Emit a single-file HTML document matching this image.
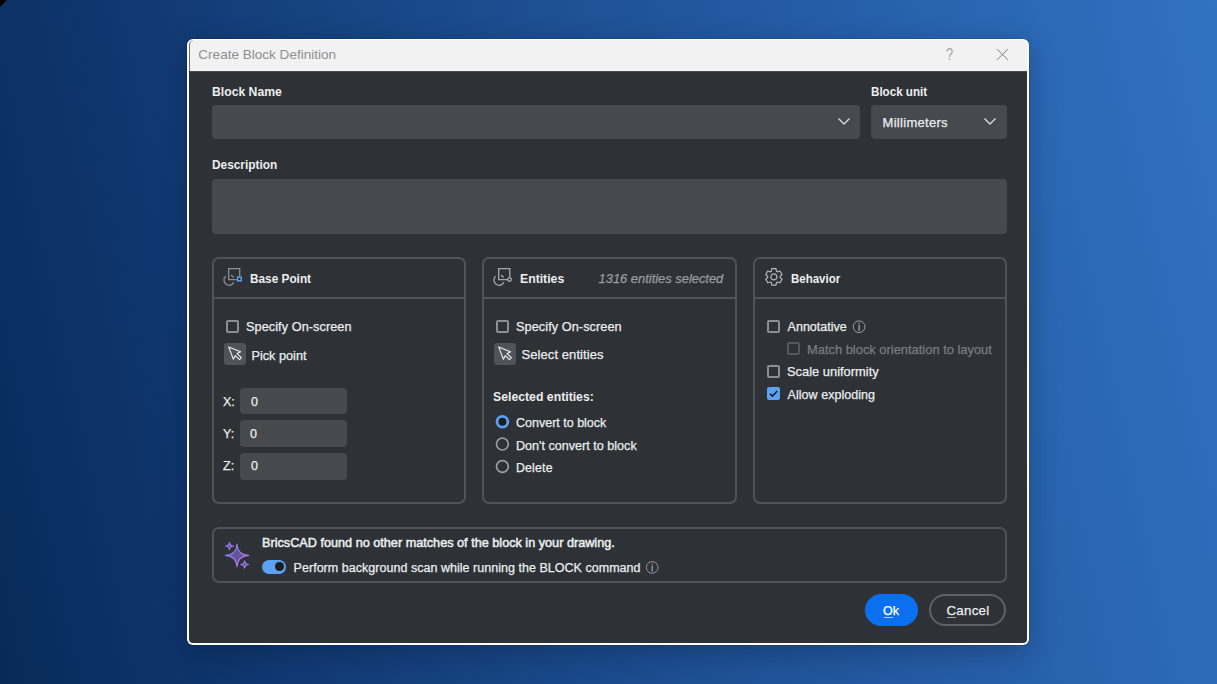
<!DOCTYPE html>
<html><head><meta charset="utf-8">
<style>
*{margin:0;padding:0;box-sizing:border-box}
html,body{width:1217px;height:684px;overflow:hidden}
body{position:relative;font-family:"Liberation Sans",sans-serif;background:linear-gradient(78deg,#082a5a 0%,#1d4f93 50%,#3172c2 100%)}
.a{position:absolute}
.t{position:absolute;white-space:nowrap;line-height:1;color:#eceef0;-webkit-text-stroke-width:0.25px}
.b{font-weight:bold;-webkit-text-stroke-width:0}
#dlg{left:187px;top:39px;width:842px;height:606px;background:#fff;border-radius:6px;box-shadow:0 0 1px rgba(0,0,0,.6),0 8px 28px rgba(0,10,30,.28)}
#title{left:189px;top:40px;width:838px;height:31px;background:#f2f2f2;border-top-left-radius:5px;border-top-right-radius:5px;border-left:1px solid #6a6a6a}
#content{left:189px;top:71px;width:838px;height:572px;background:#2e3136;border-bottom-left-radius:4px;border-bottom-right-radius:4px}
.inp{position:absolute;background:#46494e;border-radius:4px}
.grp{position:absolute;border:2px solid #505358;border-radius:7px}
.grp .div{position:absolute;left:0;right:0;top:38px;height:2px;background:#505358}
.cb{position:absolute;width:13px;height:13px;border:2px solid #8b8e93;border-radius:2px}
.rad{position:absolute;width:13px;height:13px;border:2px solid #8b8e93;border-radius:50%}
.btnic{position:absolute;width:22px;height:21px;background:#50535a;border-radius:3px}
</style></head><body>
<div class="a" style="left:0;top:0;width:0;height:0;border-top:7px solid #000;border-right:7px solid transparent"></div>
<div id="dlg" class="a"></div>
<div id="title" class="a"></div>
<div id="content" class="a"></div>
<div class="a" style="left:190px;top:71px;width:837px;height:1px;background:#4a4d52"></div>
<div class="a" style="left:190px;top:72px;width:837px;height:1px;background:#2a2d31"></div>

<!-- title -->
<div class="t" style="left:198.3px;top:47.8px;font-size:13.55px;color:#8f8f8f;-webkit-text-stroke-width:0">Create Block Definition</div>
<div class="t" style="left:946.3px;top:47.4px;font-size:16px;color:#a3a3a3;-webkit-text-stroke-width:0;transform-origin:0 0;transform:scaleX(0.8)">?</div>
<svg class="a" style="left:996px;top:48px" width="13" height="13" viewBox="0 0 13 13"><path d="M1 1L12 12M12 1L1 12" stroke="#8f8f8f" stroke-width="1.05" fill="none"/></svg>

<!-- block name -->
<div class="t b" style="left:211.5px;top:85.8px;font-size:12.8px;transform-origin:0 0;transform:scaleX(0.953)">Block Name</div>
<div class="inp" style="left:212px;top:105px;width:648px;height:34px"></div>
<svg class="a" style="left:837px;top:117px" width="14" height="9" viewBox="0 0 14 9"><path d="M1.5 1.5L7 7L12.5 1.5" stroke="#d8dadc" stroke-width="1.4" fill="none"/></svg>
<div class="t b" style="left:871.1px;top:86.3px;font-size:12.8px;transform-origin:0 0;transform:scaleX(0.908)">Block unit</div>
<div class="inp" style="left:871px;top:105px;width:135.5px;height:34px"></div>
<div class="t" style="left:882.5px;top:115.8px;font-size:13px;letter-spacing:0.3px">Millimeters</div>
<svg class="a" style="left:983px;top:117px" width="14" height="9" viewBox="0 0 14 9"><path d="M1.5 1.5L7 7L12.5 1.5" stroke="#d8dadc" stroke-width="1.4" fill="none"/></svg>

<!-- description -->
<div class="t b" style="left:211.9px;top:159.2px;font-size:12.8px;transform-origin:0 0;transform:scaleX(0.926)">Description</div>
<div class="inp" style="left:212px;top:178.5px;width:794.5px;height:55.5px"></div>

<!-- groups -->
<div class="grp" style="left:212px;top:257px;width:253.5px;height:246.8px"><div class="div"></div></div>
<div class="grp" style="left:482px;top:257px;width:254.5px;height:246.8px"><div class="div"></div></div>
<div class="grp" style="left:753px;top:257px;width:253.5px;height:246.8px"><div class="div"></div></div>

<!-- base point -->
<div class="t b" style="left:250.2px;top:272.8px;font-size:12.8px;transform-origin:0 0;transform:scaleX(0.923)">Base Point</div>
<div class="cb" style="left:226px;top:319.5px"></div>
<div class="t" style="left:246px;top:321.2px;font-size:12.7px;letter-spacing:0.07px">Specify On-screen</div>
<div class="btnic" style="left:224px;top:343px;height:22px"></div>
<div class="t" style="left:251.5px;top:350.2px;font-size:12.7px">Pick point</div>
<div class="t" style="left:223px;top:395.8px;font-size:12.5px">X:</div>
<div class="inp" style="left:240px;top:387.5px;width:107px;height:26.5px"></div>
<div class="t" style="left:251px;top:395.8px;font-size:12.5px">0</div>
<div class="t" style="left:223px;top:427.5px;font-size:12.5px">Y:</div>
<div class="inp" style="left:239.5px;top:420px;width:107.5px;height:26.5px"></div>
<div class="t" style="left:250px;top:427.5px;font-size:12.5px">0</div>
<div class="t" style="left:223px;top:460.4px;font-size:12.5px">Z:</div>
<div class="inp" style="left:240px;top:453px;width:107px;height:26.5px"></div>
<div class="t" style="left:251px;top:460.4px;font-size:12.5px">0</div>

<!-- entities -->
<div class="t b" style="left:520.3px;top:272.8px;font-size:12.8px;transform-origin:0 0;transform:scaleX(0.956)">Entities</div>
<div class="t" style="left:598.6px;top:272.6px;font-size:12.9px;font-style:italic;color:#9a9da2">1316 entities selected</div>
<div class="cb" style="left:496px;top:319.5px"></div>
<div class="t" style="left:516px;top:321.2px;font-size:12.7px;letter-spacing:0.08px">Specify On-screen</div>
<div class="btnic" style="left:494px;top:343px;height:21.5px"></div>
<div class="t" style="left:521.5px;top:348.4px;font-size:13px;letter-spacing:0.08px">Select entities</div>
<div class="t b" style="left:492.9px;top:390.8px;font-size:12.8px;transform-origin:0 0;transform:scaleX(0.958)">Selected entities:</div>
<svg class="a" style="left:494px;top:413px" width="18" height="18" viewBox="0 0 18 18"><circle cx="8.4" cy="8.7" r="5.4" fill="#1b1d21" stroke="#5ba1f6" stroke-width="2.8"/></svg>
<div class="t" style="left:516px;top:417px;font-size:12.5px">Convert to block</div>
<svg class="a" style="left:494px;top:435px" width="18" height="18" viewBox="0 0 18 18"><circle cx="8.4" cy="9.1" r="5.9" fill="none" stroke="#9a9da2" stroke-width="1.7"/></svg>
<div class="t" style="left:516px;top:440.2px;font-size:12.6px">Don't convert to block</div>
<svg class="a" style="left:494px;top:458px" width="18" height="18" viewBox="0 0 18 18"><circle cx="8.4" cy="8.5" r="5.9" fill="none" stroke="#9a9da2" stroke-width="1.7"/></svg>
<div class="t" style="left:516px;top:462px;font-size:12.3px;letter-spacing:0.2px">Delete</div>

<!-- behavior -->
<div class="t b" style="left:791.2px;top:272.9px;font-size:12.8px;transform-origin:0 0;transform:scaleX(0.898)">Behavior</div>
<div class="cb" style="left:767px;top:319.5px"></div>
<div class="t" style="left:787.6px;top:320.5px;font-size:12.5px">Annotative</div>
<div class="cb" style="left:787px;top:342px;border-color:#55585d"></div>
<div class="t" style="left:807px;top:344px;font-size:12.9px;color:#7a7d82">Match block orientation to layout</div>
<div class="cb" style="left:767px;top:364.6px"></div>
<div class="t" style="left:787px;top:365.7px;font-size:12.9px">Scale uniformity</div>
<div class="a" style="left:767px;top:387px;width:13px;height:13px;border-radius:2px;background:#5ba1f6"></div>
<svg class="a" style="left:767px;top:387px" width="13" height="13" viewBox="0 0 13 13"><path d="M3 6.8L5.4 9.2L10.2 4" stroke="#15171a" stroke-width="1.6" fill="none"/></svg>
<div class="t" style="left:787.6px;top:389px;font-size:12.5px;letter-spacing:0.04px">Allow exploding</div>

<!-- notification -->
<div class="grp" style="left:212px;top:527px;width:794.5px;height:56px"></div>
<div class="t" style="left:261.5px;top:536.8px;font-size:12.8px;-webkit-text-stroke-width:0.5px;transform-origin:0 0;transform:scaleX(0.99)">BricsCAD found no other matches of the block in your drawing.</div>
<div class="a" style="left:261.8px;top:559.5px;width:24.6px;height:14.3px;border-radius:7.15px;background:#5ba1f6"></div>
<div class="a" style="left:275.4px;top:562.4px;width:8.6px;height:8.6px;border-radius:50%;background:#1b1d21"></div>
<div class="t" style="left:293.6px;top:562px;font-size:12.5px;letter-spacing:0.03px">Perform background scan while running the BLOCK command</div>

<!-- buttons -->
<div class="a" style="left:865px;top:594px;width:53px;height:32px;border-radius:16px;background:#0b70f0"></div>
<div class="t" style="left:883px;top:605px;font-size:12.5px;color:#fff">Ok</div>
<div class="a" style="left:929px;top:594px;width:77px;height:32px;border-radius:16px;border:2px solid #5e6166"></div>
<div class="t" style="left:946.5px;top:604.2px;font-size:13.3px;letter-spacing:0.25px">Cancel</div>
<div class="a" style="left:883.5px;top:617px;width:9px;height:1px;background:#b8c8e8"></div>
<div class="a" style="left:946.5px;top:617px;width:9px;height:1px;background:#a9acb0"></div>

<!-- icons -->
<svg class="a" style="left:220px;top:264px" width="26" height="26" viewBox="0 0 26 26">
<path d="M19.7 12.4V4.6H8.7V15.7H16.6" stroke="#8d9095" stroke-width="1.3" fill="none"/>
<path d="M11 11L13.7 13.5" stroke="#8d9095" stroke-width="1.3" fill="none"/>
<path d="M5.7 12.2A5.2 5.2 0 1 0 13.9 18.25" stroke="#8d9095" stroke-width="1.3" fill="none"/>
<rect x="17.6" y="13.2" width="3.6" height="3.6" stroke="#5ba1f6" stroke-width="1.5" fill="#1b1d21"/>
</svg>
<svg class="a" style="left:490px;top:264px" width="26" height="26" viewBox="0 0 26 26">
<path d="M19.8 13.6V4.6H8.7V15.7H17.4" stroke="#a6a9ae" stroke-width="1.3" fill="none"/>
<path d="M11 11L13.7 13.5" stroke="#a6a9ae" stroke-width="1.3" fill="none"/>
<path d="M5.7 12.2A5.2 5.2 0 1 0 13.9 18.25" stroke="#a6a9ae" stroke-width="1.3" fill="none"/>
<circle cx="19.5" cy="15.6" r="1.8" stroke="#b5b8bd" stroke-width="1.3" fill="#1b1d21"/>
</svg>
<svg class="a" style="left:761px;top:264px" width="26" height="26" viewBox="-12.9 -12.9 26 26">
<path d="M-2.62 -5.62 L-2.06 -8.25 L2.06 -8.25 L2.62 -5.62 A6.2 6.2 0 0 1 3.56 -5.08 L6.11 -5.90 L8.17 -2.34 L6.18 -0.54 A6.2 6.2 0 0 1 6.18 0.54 L8.17 2.34 L6.11 5.90 L3.56 5.08 A6.2 6.2 0 0 1 2.62 5.62 L2.06 8.25 L-2.06 8.25 L-2.62 5.62 A6.2 6.2 0 0 1 -3.56 5.08 L-6.11 5.90 L-8.17 2.34 L-6.18 0.54 A6.2 6.2 0 0 1 -6.18 -0.54 L-8.17 -2.34 L-6.11 -5.90 L-3.56 -5.08 A6.2 6.2 0 0 1 -2.62 -5.62 Z" stroke="#b5b8bd" stroke-width="1.2" fill="none" stroke-linejoin="round"/>
<circle cx="0" cy="0" r="3" stroke="#b5b8bd" stroke-width="1.2" fill="none"/>
</svg>
<svg class="a" style="left:222px;top:341px" width="26" height="26" viewBox="0 0 26 26">
<path d="M6.65 5.9L18.6 10.8L15 12.6L19.4 16.7L17.5 18.6L13.3 14.6L11.4 18.25Z" stroke="#f0f1f2" stroke-width="1.1" fill="none" stroke-linejoin="round"/>
</svg>
<svg class="a" style="left:492px;top:341px" width="26" height="26" viewBox="0 0 26 26">
<path d="M6.65 5.9L18.6 10.8L15 12.6L19.4 16.7L17.5 18.6L13.3 14.6L11.4 18.25Z" stroke="#f0f1f2" stroke-width="1.1" fill="none" stroke-linejoin="round"/>
</svg>
<svg class="a" style="left:850px;top:318px" width="18" height="18" viewBox="0 0 18 18">
<circle cx="9.1" cy="8.75" r="5.85" stroke="#a0a3a8" stroke-width="0.95" fill="none"/>
<rect x="8.55" y="4.8" width="1.1" height="1.1" fill="#b8bbc0"/><rect x="8.55" y="6.8" width="1.1" height="6" fill="#b8bbc0"/>
</svg>
<svg class="a" style="left:643px;top:559px" width="18" height="18" viewBox="0 0 18 18">
<circle cx="9.2" cy="8.4" r="5.85" stroke="#9a9da2" stroke-width="0.95" fill="none"/>
<rect x="8.65" y="4.45" width="1.1" height="1.1" fill="#b0b3b8"/><rect x="8.65" y="6.45" width="1.1" height="6" fill="#b0b3b8"/>
</svg>
<svg class="a" style="left:220px;top:538px" width="34" height="34" viewBox="0 0 34 34">
<defs><linearGradient id="sg" x1="0" y1="0" x2="1" y2="1"><stop offset="0" stop-color="#5f8ff2"/><stop offset="1" stop-color="#d36be0"/></linearGradient>
<linearGradient id="sf" x1="0" y1="0" x2="1" y2="1"><stop offset="0" stop-color="#4a5aa0"/><stop offset="1" stop-color="#7a4a9a"/></linearGradient></defs>
<path d="M17.00 5.95Q17.60 16.75 28.60 17.35Q17.60 17.95 17.00 28.75Q16.40 17.95 5.40 17.35Q16.40 16.75 17.00 5.95Z" fill="url(#sf)" stroke="url(#sg)" stroke-width="1.1" stroke-linejoin="round"/>
<path d="M9.45 4.35Q9.85 7.65 13.45 8.05Q9.85 8.45 9.45 11.75Q9.05 8.45 5.45 8.05Q9.05 7.65 9.45 4.35Z" fill="url(#sf)" stroke="url(#sg)" stroke-width="1.1" stroke-linejoin="round"/>
<path d="M24.60 22.80Q25.00 26.10 28.60 26.50Q25.00 26.90 24.60 30.20Q24.20 26.90 20.60 26.50Q24.20 26.10 24.60 22.80Z" fill="url(#sf)" stroke="url(#sg)" stroke-width="1.1" stroke-linejoin="round"/>
</svg>
</body></html>
